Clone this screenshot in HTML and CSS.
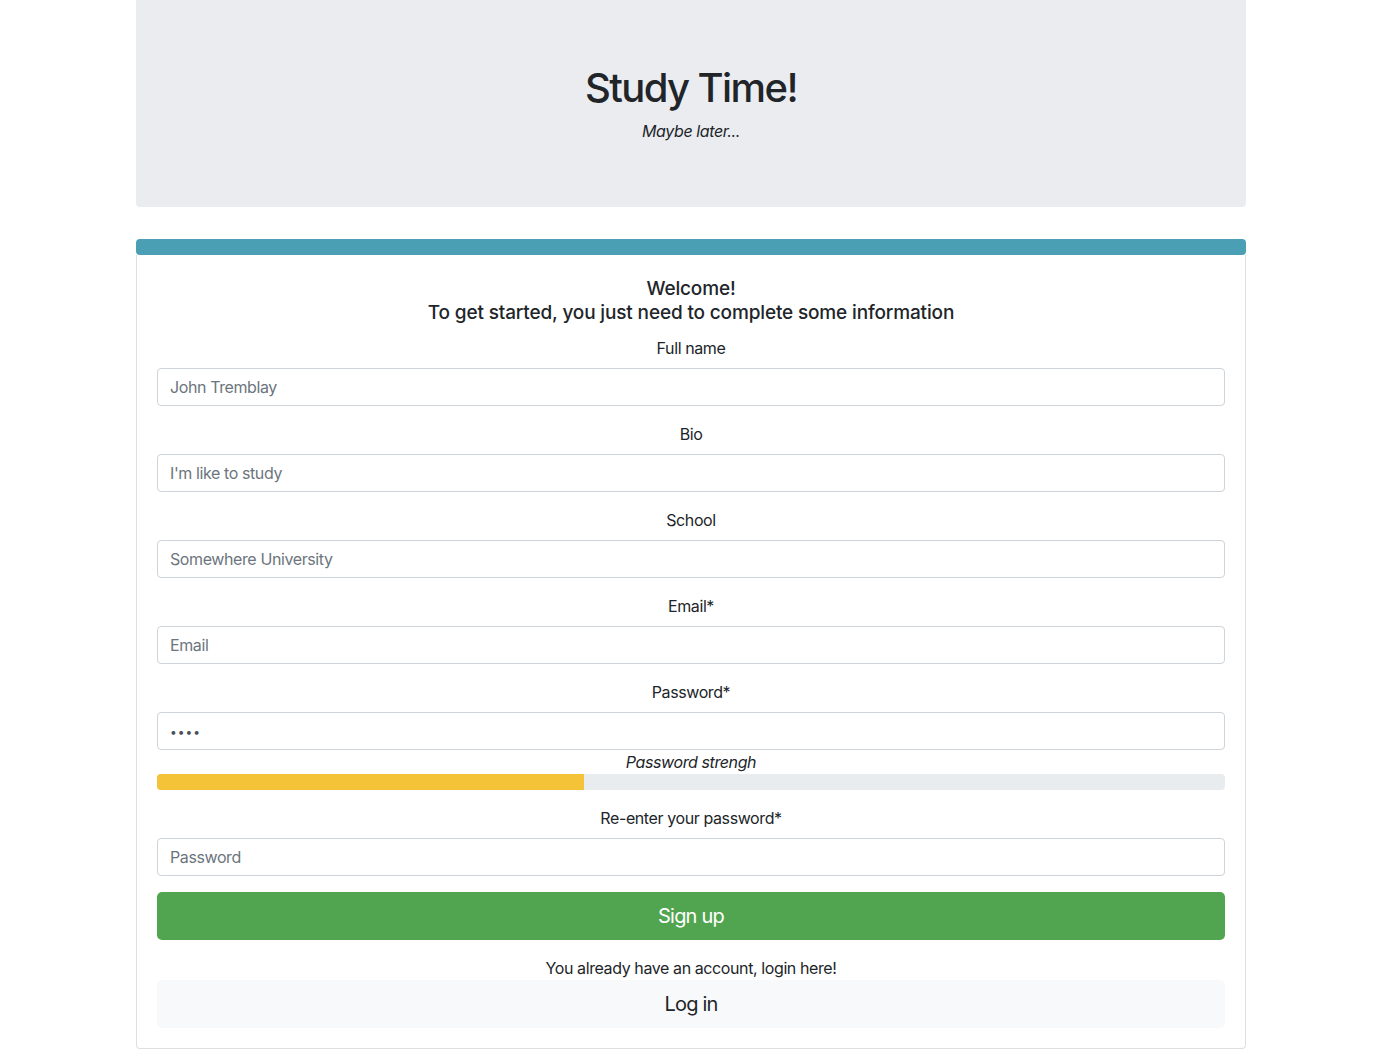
FILE: index.html
```html
<!DOCTYPE html>
<html lang="en">
<head>
<meta charset="utf-8">
<title>Study Time!</title>
<link rel="stylesheet" href="styles.css">
</head>
<body>
<div class="container">
  <header class="jumbotron">
    <h1 class="title">Study Time!</h1>
    <p class="subtitle">Maybe later...</p>
  </header>

  <div class="topbar"></div>
  <section class="card">
    <h5 class="welcome">Welcome!<br>To get started, you just need to complete some information</h5>
    <form class="form">
      <div class="group">
        <label class="label">Full name</label>
        <input class="input" type="text" placeholder="John Tremblay">
      </div>
      <div class="group">
        <label class="label">Bio</label>
        <input class="input" type="text" placeholder="I'm like to study">
      </div>
      <div class="group">
        <label class="label">School</label>
        <input class="input" type="text" placeholder="Somewhere University">
      </div>
      <div class="group">
        <label class="label">Email*</label>
        <input class="input" type="email" placeholder="Email">
      </div>
      <div class="group group-tight">
        <label class="label">Password*</label>
        <input class="input input-pw" type="password" value="abcd">
      </div>
      <div class="strength">
        <div class="strength-label">Password strengh</div>
        <div class="progress"><div class="progress-fill" style="width:40%"></div></div>
      </div>
      <div class="group">
        <label class="label">Re-enter your password*</label>
        <input class="input" type="password" placeholder="Password">
      </div>
      <button class="btn btn-success" type="button">Sign up</button>
      <p class="already">You already have an account, login here!</p>
      <button class="btn btn-light" type="button">Log in</button>
    </form>
  </section>
</div>
</body>
</html>
```

FILE: styles.css
```css
* { box-sizing: border-box; }
html, body { margin: 0; padding: 0; }
body {
  font-family: Inter, "Noto Sans", "Liberation Sans", sans-serif;
  font-size: 16px;
  line-height: 1.5;
  letter-spacing: -0.4px;
  color: #212529;
  background: #fff;
}
.container {
  width: 1110px;
  margin: 0 0 0 136px;
}
.jumbotron {
  background: #eaecf0;
  border-radius: 0 0 4px 4px;
  padding: 64px 32px 64px;
  text-align: center;
}
.title {
  margin: 0 0 7px;
  font-size: 40px;
  font-weight: 500;
  line-height: 48px;
  letter-spacing: -1.6px;
}
.subtitle {
  margin: 0;
  font-style: italic;
  line-height: 24px;
}
.topbar {
  margin-top: 32px;
  height: 16px;
  background: #4a9fb5;
  border-radius: 4px;
}
.card {
  border: 1px solid #dfdfdf;
  border-top: none;
  border-radius: 0 0 4px 4px;
  padding: 22px 20px 20px;
}
.welcome {
  margin: 0 0 11px;
  text-align: center;
  font-size: 19px;
  font-weight: 500;
  line-height: 24px;
  letter-spacing: -0.15px;
}
.form { display: flex; flex-direction: column; }
.group {
  display: flex;
  flex-direction: column;
  margin-bottom: 16px;
}
.group-tight { margin-bottom: 0; }
.label {
  text-align: center;
  line-height: 24px;
  margin-bottom: 8px;
  font-size: 16px;
}
.input {
  height: 38px;
  border: 1px solid #ced4da;
  border-radius: 4px;
  padding: 6px 12px;
  font-family: inherit;
  font-size: 16px;
  letter-spacing: -0.4px;
  color: #495057;
  background: #fff;
}
.input::placeholder { color: #6c757d; }
.input-pw { font-size: 12px; letter-spacing: 1px; }
.strength { margin-bottom: 16px; }
.strength-label {
  text-align: center;
  font-style: italic;
  line-height: 24px;
}
.progress {
  height: 16px;
  background: #e9ecef;
  border-radius: 4px;
  overflow: hidden;
}
.progress-fill {
  height: 100%;
  background: #f4c337;
}
.btn {
  height: 48px;
  border: none;
  border-radius: 5px;
  font-family: inherit;
  font-size: 20px;
  line-height: 30px;
  letter-spacing: -0.8px;
  padding: 8px 16px;
  cursor: pointer;
}
.btn-success { background: #52a550; color: #fff; }
.btn-light { background: #f8f9fa; color: #212529; }
.already {
  margin: 16px 0 0;
  text-align: center;
  line-height: 24px;
}
```
